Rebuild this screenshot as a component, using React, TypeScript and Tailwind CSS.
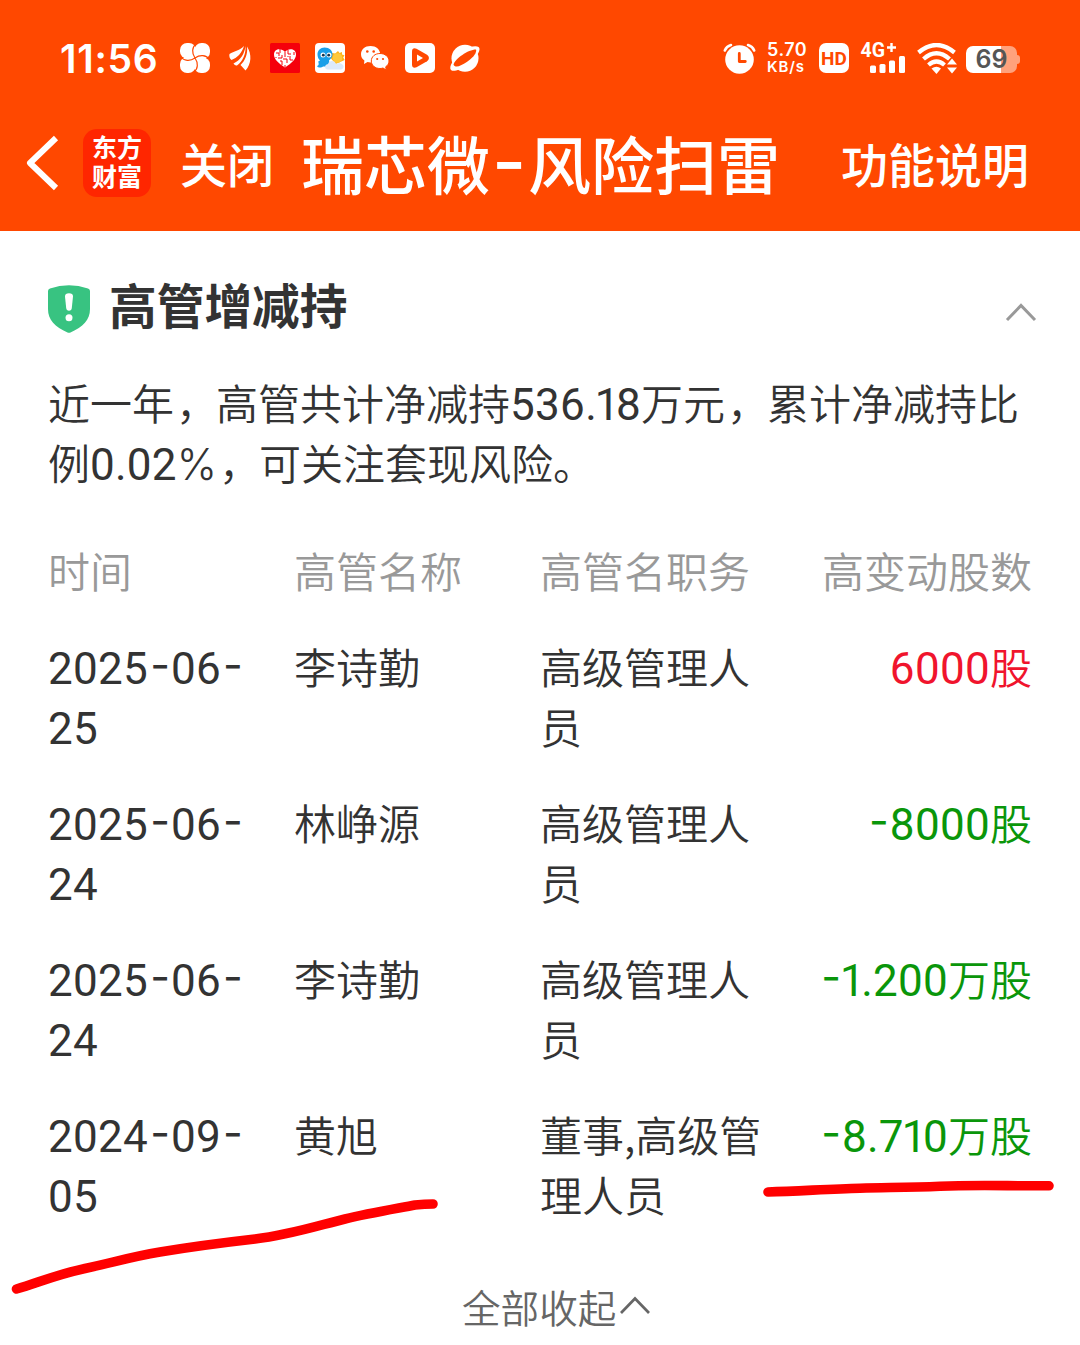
import React from "react";

const CJK = "font-['Noto_Sans_CJK_SC',sans-serif]";

/* Latin runs use a slightly larger face than the Chinese text around them. */
function Mixed({ text }: { text: string }) {
  const runs = text.match(/1|[02-9]+|-|\.|%|，|[^0-9.%，-]+/g) ?? [];
  return (
    <>
      {runs.map((run, i) => {
        if (run === "1")
          return <span key={i} className="-ml-[2px] font-['Roboto',sans-serif] text-[44px] font-normal leading-none tracking-[-3.500px]">1</span>;
        if (/^[0-9]+$/.test(run))
          return <span key={i} className="font-['Roboto',sans-serif] text-[44px] font-normal leading-none tracking-[0.3px]">{run}</span>;
        if (run === "-")
          return <span key={i} className="relative -top-[4px] ml-[2px] mr-[1px] font-['Inter',sans-serif] text-[43px] font-normal leading-none">-</span>;
        if (run === ".")
          return <span key={i} className="font-['Roboto',sans-serif] text-[44px] font-normal leading-none">.</span>;
        if (run === "%")
          return <span key={i} className="font-['Inter',sans-serif] text-[43px] font-[350] leading-none">%</span>;
        if (run === "，")
          return <span key={i} className="relative left-[2px]">，</span>;
        return <span key={i}>{run}</span>;
      })}
    </>
  );
}

function CloverIcon() {
  return (
    <svg className="size-[30px]" viewBox="0 0 30 30">
      <g fill="#fff">
        <rect x="0" y="0" width="16" height="15.500" rx="7" />
        <rect x="14.500" y="0" width="15.500" height="16" rx="7" />
        <rect x="0" y="14" width="15.500" height="16" rx="7" />
        <rect x="14" y="14.500" width="16" height="15.500" rx="7" />
        <circle cx="15" cy="15" r="8" />
      </g>
      <path d="M16 1C12 4 11.500 10 15 15M29 16C26 12 20 11.500 15 15M14 29C18 26 18.500 20 15 15M1 14C4 18 10 18.500 15 15" fill="none" stroke="#ff4800" strokeWidth="1.200" />
    </svg>
  );
}

function FeatherIcon() {
  return (
    <svg className="size-[30px]" viewBox="0 0 30 30" fill="#fff">
      <path d="M4.500 11C9 8 14 8 19 3C17 10 12 15 6.500 17C4.500 15.500 4 13 4.500 11Z" />
      <path d="M20.500 3C19.500 11 15.500 17 8.500 20.500C9.500 22 10.500 22.500 12 22.500C18 18 21 11 20.500 3Z" />
      <path d="M22 3.500C23 11 20 18 15.500 22L20.500 27.500C26.500 21 27 11 22 3.500Z" />
    </svg>
  );
}

function HeartBadge() {
  return (
    <svg className="size-[30px]" viewBox="0 0 30 30">
      <rect width="30" height="30" rx="1.500" fill="#f5000b" />
      <path d="M15 24.500C8 20 4 16 4 11.500C4 5.500 11.500 4.500 15 9C18.500 4.500 26 5.500 26 11.500C26 16 22 20 15 24.500Z" fill="#fff" />
      <path d="M6 10h3v3M10 6v4M8 15h4v-3M12 22v-4h-2M15 9v5M13 16h4v4M18 7v4h3M20 13v4h3M24 9v3M18 14v-1M6 14v1M15 22v2" fill="none" stroke="#f5000b" strokeWidth="1" />
    </svg>
  );
}

function WeatherIcon() {
  return (
    <svg className="size-[30px]" viewBox="0 0 30 30">
      <rect width="30" height="30" rx="4" fill="#fff" />
      <path d="M23 8l1.500 2 2.500-1 0 2.500 2.500.8-1.300 2.200 1.500 2.500-9 4-6-7 2.500-4 3 .5z" fill="#ffb31a" />
      <circle cx="22.500" cy="15" r="4.800" fill="#ffc93c" />
      <path d="M9.500 4.500c5 0 8 3 8 7 0 3-2 4.500-3.500 6l1 6H8c-1.500 1.500-5 1.500-6-.5 2-.2 2-2 1.200-4.500L5 17.500C3.500 16 2.500 14 2.500 11.500c0-4 3-7 7-7z" fill="#199fe8" />
      <circle cx="8" cy="12" r="2.500" fill="#fff" />
      <circle cx="14" cy="12" r="2.500" fill="#fff" />
      <circle cx="8.300" cy="12.200" r="1.400" fill="#12344f" />
      <circle cx="13.700" cy="12.200" r="1.400" fill="#12344f" />
      <path d="M12.500 26.500c-3 0-3.500-5 .5-5.500 1-4 7-4 8 0 4-2 8 .5 7.500 3-.3 2-2 2.500-3.500 2.500z" fill="#dceafa" />
    </svg>
  );
}

function WeChatIcon() {
  return (
    <svg className="size-[30px]" viewBox="0 0 30 30">
      <path d="M10.500 3C5 3 1 6.500 1 11.200c0 2.800 1.400 4.800 3.400 6.200L4 21l3.500-2c1 .3 2 .4 3 .4 5.500 0 9.700-3.500 9.700-8.200S16 3 10.500 3z" fill="#fff" />
      <path d="M20 10.500c-5 0-8.700 3.200-8.700 7.500S15 25.500 20 25.500c1 0 2-.2 3-.5l3.200 2-.5-3.200c2-1.300 3.300-3.300 3.300-5.800 0-4.300-4-7.500-9-7.500z" fill="#fff" stroke="#ff4800" strokeWidth="1" />
      <g fill="#ff4800">
        <circle cx="7.300" cy="8.500" r="1.300" />
        <circle cx="13.700" cy="8.500" r="1.300" />
        <circle cx="17.200" cy="16" r="1.100" />
        <circle cx="23" cy="16" r="1.100" />
      </g>
    </svg>
  );
}

function PlayBadge() {
  return (
    <svg className="size-[30px]" viewBox="0 0 30 30">
      <rect width="30" height="30" rx="5" fill="#fff" />
      <path d="M7 8.500c0-3 2-4 4.500-2.700L22 11.800c2.500 1.500 2.500 5 0 6.500L11.500 24.300C9 25.500 7 24.500 7 21.500z" fill="#ff4800" />
      <path d="M12 11.500v7l6-3.500z" fill="#fff" />
    </svg>
  );
}

function PlanetIcon() {
  return (
    <svg className="size-[30px]" viewBox="0 0 30 30">
      <circle cx="15" cy="15.300" r="13.500" fill="#fff" />
      <path d="M19.500 4.500C25 2.500 30 3 29.500 6.500C29 11 24 17 17 22C9 27.500 1 30 .3 25.500C0 23 1.500 20.500 3 18" fill="#fff" />
      <path d="M3.500 21.500C5 16 18 6.500 26 6.500C27 9 24 14 17.500 18.500C11 23 5 25.500 3.500 21.500Z" fill="#ff4800" />
    </svg>
  );
}

function AlarmIcon() {
  return (
    <svg className="h-[31px] w-[33px]" viewBox="0 0 33 31">
      <circle cx="16.500" cy="16.500" r="14.300" fill="#fff" />
      <path d="M1.800 7.500Q3.500 3.300 8 2M31.200 7.500Q29.500 3.300 25 2" stroke="#fff" strokeWidth="2.600" strokeLinecap="round" fill="none" />
      <path d="M16.300 10.500v8h6" stroke="#ff4800" strokeWidth="2.800" fill="none" strokeLinecap="round" strokeLinejoin="round" />
    </svg>
  );
}

function SignalIcon() {
  return (
    <svg className="h-[32px] w-[45px] overflow-visible" viewBox="0 0 45 32">
      <text x="-0.500" y="14.800" fill="#fff" fontFamily="Roboto, sans-serif" fontWeight="700" fontSize="19.500">4G</text>
      <path d="M26 5.500h9M30.500 1v9" stroke="#fff" strokeWidth="2.400" />
      <g fill="#fff">
        <rect x="9" y="23.500" width="6" height="7.500" rx="1.500" />
        <rect x="18.500" y="22" width="6" height="9" rx="1.500" />
        <rect x="28" y="18.500" width="6" height="12.500" rx="1.500" />
        <rect x="38" y="14" width="6" height="17" rx="1.500" />
      </g>
    </svg>
  );
}

function WifiIcon() {
  return (
    <svg className="h-[31px] w-[40px]" viewBox="0 0 40 31">
      <g fill="none" stroke="#fff" strokeWidth="4.300">
        <path d="M1.500 9.500Q19.500-5.500 37.500 9.500" />
        <path d="M6.500 16Q19.500 4.500 32.500 16" />
        <path d="M11.500 22Q19.500 15 27.500 22" />
      </g>
      <path d="M14.500 25.500Q19.500 22 24 25.500L19.500 31Z" fill="#fff" />
      <path d="M30 21.500L35 15.500L40 21.500ZM30 24.500L35 30.500L40 24.500Z" fill="#fff" />
    </svg>
  );
}

function ShieldIcon() {
  return (
    <svg className="h-[48px] w-[42px]" viewBox="0 0 42 48">
      <path d="M0 6Q0 4 2 3.500Q21-3 40 3.500Q42 4 42 6V24C42 35 35 42 22.500 47.500Q21 48.200 19.500 47.500C7 42 0 35 0 24Z" fill="#38c381" />
      <path d="M17 11.500Q17 8.300 21 8.300Q25 8.300 25 11.500L23.800 23Q23.500 25.800 21 25.800Q18.500 25.800 18.200 23Z" fill="#fff" />
      <circle cx="21" cy="32.700" r="3.500" fill="#fff" />
    </svg>
  );
}

const rows = [
  { date: ["2025-06-", "25"], name: "李诗勤", role: ["高级管理人", "员"], change: "6000股", up: true },
  { date: ["2025-06-", "24"], name: "林峥源", role: ["高级管理人", "员"], change: "-8000股", up: false },
  { date: ["2025-06-", "24"], name: "李诗勤", role: ["高级管理人", "员"], change: "-1.200万股", up: false },
  { date: ["2024-09-", "05"], name: "黄旭", role: ["董事,高级管", "理人员"], change: "-8.710万股", up: false },
];

function StatusBar() {
  return (
    <div className="flex h-[116px] items-center justify-between pl-[60px] pr-[60px] text-white">
      <div className="flex items-center gap-[15px]">
        <span className="w-[105px] whitespace-nowrap font-['Inter',sans-serif] text-[39px] font-semibold leading-none tracking-[0.7px]">11:56</span>
        <CloverIcon />
        <FeatherIcon />
        <HeartBadge />
        <WeatherIcon />
        <WeChatIcon />
        <PlayBadge />
        <PlanetIcon />
      </div>
      <div className="flex items-center">
        <AlarmIcon />
        <div className="ml-[11px] flex w-[41px] flex-col gap-px font-['Inter',sans-serif] font-semibold">
          <span className="text-[18px] leading-[16px] tracking-[0.5px]">5.70</span>
          <span className="text-[15px] leading-[15px] tracking-[0.9px]">KB/s</span>
        </div>
        <div className="ml-[11px] flex size-[30px] items-center justify-center rounded-[7px] bg-white font-['Roboto',sans-serif] text-[19px] font-bold leading-none text-[#ff4800]">
          HD
        </div>
        <div className="ml-[12px]"><SignalIcon /></div>
        <div className="ml-[11px]"><WifiIcon /></div>
        <div className="ml-[9px] mt-[3px] flex items-center">
          <div className="flex h-[27px] w-[51px] items-center justify-center rounded-[7px] bg-linear-to-r from-white from-69% to-[#ffa27c] to-69% font-['Inter',sans-serif] text-[25px] font-semibold leading-none text-[#555]">
            69
          </div>
          <div className="h-[9px] w-[3px] rounded-r-[3px] bg-[#ffa27c]" />
        </div>
      </div>
    </div>
  );
}

function NavBar() {
  return (
    <div className="flex h-[94px] items-center text-white">
      <svg className="ml-[26px] h-[58px] w-[34px]" viewBox="0 0 34 58">
        <path d="M30 4L4 29L30 54" fill="none" stroke="#fff" strokeWidth="6" strokeLinejoin="round" />
      </svg>
      <div className="ml-[23px] flex h-[68px] w-[68px] flex-col items-center justify-center rounded-[14px] bg-[#ff2600] pb-[4px] text-[25px] font-bold leading-[29px]">
        <span className="h-[29px]">东方</span>
        <span className="h-[29px]">财富</span>
      </div>
      <span className="-mt-[2px] ml-[29px] w-[121px] text-[47px] font-medium leading-none">关闭</span>
      <span className="-mt-[4px] flex w-[540px] items-center whitespace-nowrap text-[63px] font-medium leading-none">
        瑞芯微<span className="flex w-[38px] justify-center font-['Inter',sans-serif] text-[74px] leading-[50px]">-</span>风险扫雷
      </span>
      <span className="-mt-[2px] whitespace-nowrap text-[47px] font-medium leading-none">功能说明</span>
    </div>
  );
}

export default function App() {
  return (
    <div className={`relative h-[1345px] w-[1080px] overflow-hidden bg-white text-[#333] ${CJK}`}>
      <header className="h-[231px] bg-[#ff4800]">
        <StatusBar />
        <NavBar />
      </header>

      <main className="pl-[48px] pr-[48px] pt-[42px]">
        <div className="flex h-[72px] items-center">
          <ShieldIcon />
          <h1 className="-mt-[11px] ml-[19px] text-[47.700px] font-bold leading-none">高管增减持</h1>
          <svg className="ml-auto mr-[-5px] mt-[6px] h-[20px] w-[32px]" viewBox="0 0 32 20">
            <path d="M2 18L16 3.500L30 18" fill="none" stroke="#999" strokeWidth="3" />
          </svg>
        </div>

        <p className="mt-[27px] whitespace-nowrap text-[42px] font-[350] leading-[60px]">
          <span className="block h-[60px]"><Mixed text="近一年，高管共计净减持536.18万元，累计净减持比" /></span>
          <span className="block h-[60px]"><Mixed text="例0.02%，可关注套现风险。" /></span>
        </p>

        <div className="mt-[48px] grid grid-cols-[246px_246px_1fr_auto] whitespace-nowrap text-[42px] font-[350] leading-[60px] text-[#999]">
          <span>时间</span>
          <span>高管名称</span>
          <span>高管名职务</span>
          <span>高变动股数</span>
        </div>

        {rows.map((row, i) => (
          <div key={i} className="mt-[36px] grid h-[120px] grid-cols-[246px_246px_1fr_auto] whitespace-nowrap text-[42px] font-[350] leading-[60px]">
            <div>
              {row.date.map((line) => (
                <div key={line} className="h-[60px]"><Mixed text={line} /></div>
              ))}
            </div>
            <div className="h-[60px]">{row.name}</div>
            <div>
              {row.role.map((line) => (
                <div key={line} className="h-[60px]">{line}</div>
              ))}
            </div>
            <div className={row.up ? "h-[60px] text-[#f0142d]" : "h-[60px] text-[#0a960a]"}>
              <Mixed text={row.change} />
            </div>
          </div>
        ))}

        <div className="ml-[414px] mt-[52px] flex h-[60px] items-center text-[38.600px] font-[350] leading-[60px] text-[#666]">
          <span>全部收起</span>
          <svg className="ml-[3px] -mt-[2px] h-[20px] w-[32px]" viewBox="0 0 32 20">
            <path d="M2 18L16 3.500L30 18" fill="none" stroke="#666" strokeWidth="2.700" />
          </svg>
        </div>
      </main>

      <svg className="pointer-events-none absolute inset-0" width="1080" height="1345" viewBox="0 0 1080 1345" fill="none" stroke="#ff0000" strokeWidth="9.600" strokeLinecap="round" strokeLinejoin="round">
        <path d="M16.500 1289C40 1282 55 1275 85 1268.500S130 1257 160 1252S220 1243 255 1239S320 1225 345 1219S400 1208 415 1205Q425 1204 433 1204" />
        <path d="M768 1192C800 1191 830 1189 860 1188.200S910 1187.500 940 1186.200S1000 1185.800 1049 1185.800" />
      </svg>
    </div>
  );
}
